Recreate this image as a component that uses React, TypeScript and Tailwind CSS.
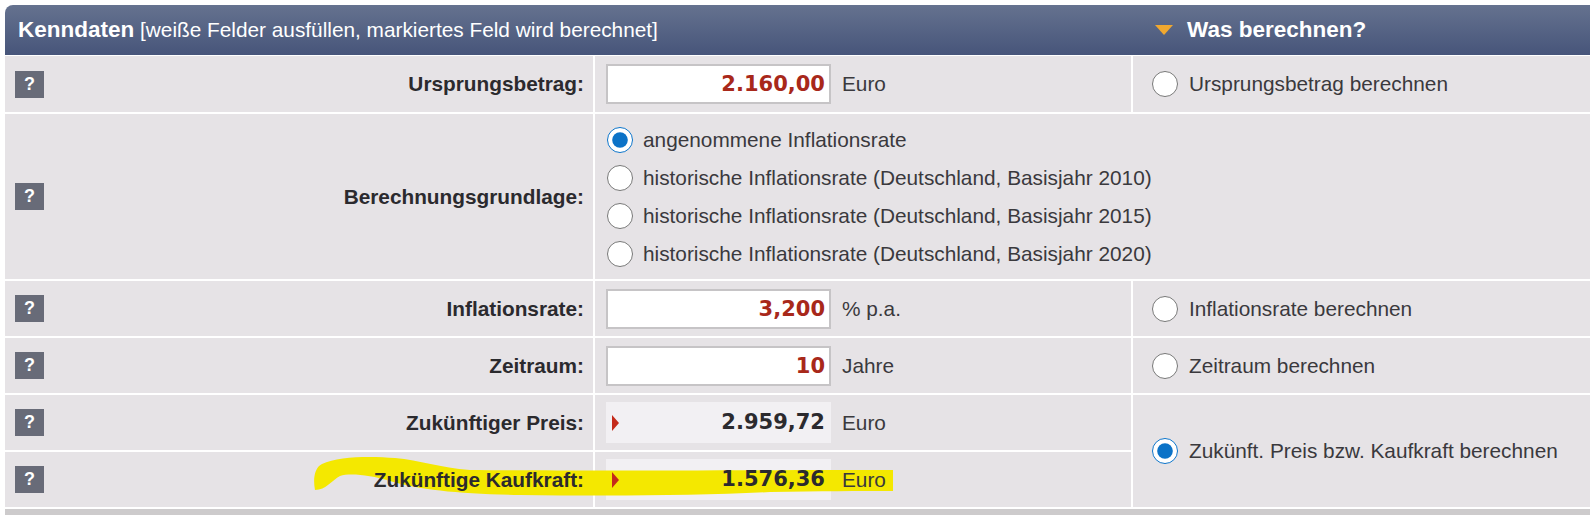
const labelClass = "flex items-center justify-between bg-[#e6e3e6] pl-[10px] pr-[9px]";
const cellClass = "flex items-center bg-[#e6e3e6]";

function HelpButton() {
  return (
    <span className="flex h-[27px] w-[29px] items-center justify-center bg-[#686b78] text-[18px] font-bold text-white">?</span>
  );
}

function Radio({ checked = false }: { checked?: boolean }) {
  return <input type="radio" readOnly checked={checked} className="m-0 h-[26px] w-[26px] shrink-0 accent-[#0b72c7]" />;
}

function Label({ text }: { text: string }) {
  return (
    <div className={labelClass}>
      <HelpButton />
      <span className="relative z-10 text-[20.8px] font-bold text-[#2b2a2e]">{text}</span>
    </div>
  );
}

function InputCell({ value, unit }: { value: string; unit: string }) {
  return (
    <div className={`${cellClass} pl-[11px]`}>
      <input
        readOnly
        value={value}
        className="h-[40px] w-[225px] border-2 border-[#c6c4c6] bg-white pr-[4px] text-right font-['DejaVu_Sans',sans-serif] text-[21px] font-bold text-[#a8281a] outline-none"
      />
      <span className="ml-[11px] text-[20.8px] text-[#3a393d]">{unit}</span>
    </div>
  );
}

function OutputCell({ value, unit }: { value: string; unit: string }) {
  return (
    <div className={`${cellClass} pl-[11px]`}>
      <div className="flex h-[41px] w-[225px] items-center justify-between bg-[#f2f0f3] pl-[6px] pr-[6px]">
        <span className="relative z-10 h-0 w-0 border-y-[8px] border-l-[7px] border-y-transparent border-l-[#c42a1a]" />
        <span className="relative z-10 font-['DejaVu_Sans',sans-serif] text-[21px] font-bold text-[#2b2a2e]">{value}</span>
      </div>
      <span className="relative z-10 ml-[11px] text-[20.8px] text-[#3a393d]">{unit}</span>
    </div>
  );
}

function CalcCell({ text, checked, span }: { text: string; checked?: boolean; span?: boolean }) {
  return (
    <div className={`${cellClass} gap-[11px] pl-[19px] ${span ? "row-span-2" : ""}`}>
      <Radio checked={checked} />
      <span className="text-[20.8px] text-[#3a393d]">{text}</span>
    </div>
  );
}

const bases = [
  "angenommene Inflationsrate",
  "historische Inflationsrate (Deutschland, Basisjahr 2010)",
  "historische Inflationsrate (Deutschland, Basisjahr 2015)",
  "historische Inflationsrate (Deutschland, Basisjahr 2020)",
];

export default function App() {
  return (
    <div className="relative flex h-[515px] w-[1590px] flex-col overflow-hidden bg-white pl-[5px] pt-[5px] font-['Liberation_Sans',sans-serif]">
      {/* Header */}
      <div className="flex h-[50px] shrink-0 items-center justify-between rounded-tl-[8px] bg-gradient-to-b from-[#65728f] to-[#47557a] pl-[13px] text-[20.8px] text-white">
        <div>
          <span className="text-[22.5px] font-bold">Kenndaten</span> [weiße Felder ausfüllen, markiertes Feld wird berechnet]
        </div>
        <div className="flex w-[435px] items-center">
          <span className="h-0 w-0 border-x-[9px] border-t-[10px] border-x-transparent border-t-[#f0a830]" />
          <span className="ml-[14px] text-[22.5px] font-bold">Was berechnen?</span>
        </div>
      </div>

      {/* Form rows */}
      <div className="mt-px grid shrink-0 grid-cols-[588px_536px_1fr] grid-rows-[56px_165px_55px_55px_55px_55px] gap-[2px]">
        <Label text="Ursprungsbetrag:" />
        <InputCell value="2.160,00" unit="Euro" />
        <CalcCell text="Ursprungsbetrag berechnen" />

        <Label text="Berechnungsgrundlage:" />
        <div className="col-span-2 flex flex-col justify-center gap-[12px] bg-[#e6e3e6] pl-[12px]">
          {bases.map((b, i) => (
            <div key={b} className="flex h-[26px] items-center gap-[10px]">
              <Radio checked={i === 0} />
              <span className="text-[20.8px] leading-[26px] text-[#3a393d]">{b}</span>
            </div>
          ))}
        </div>

        <Label text="Inflationsrate:" />
        <InputCell value="3,200" unit="% p.a." />
        <CalcCell text="Inflationsrate berechnen" />

        <Label text="Zeitraum:" />
        <InputCell value="10" unit="Jahre" />
        <CalcCell text="Zeitraum berechnen" />

        <Label text="Zukünftiger Preis:" />
        <OutputCell value="2.959,72" unit="Euro" />
        <CalcCell text="Zukünft. Preis bzw. Kaufkraft berechnen" checked span />

        <Label text="Zukünftige Kaufkraft:" />
        <OutputCell value="1.576,36" unit="Euro" />
      </div>

      <div className="mt-[2px] flex-1 bg-[#cdcbcc]" />

      {/* Marker stroke, sits between the cell backgrounds and the result row's text */}
      <svg className="pointer-events-none absolute left-0 top-0 z-[5]" width="1590" height="515" viewBox="0 0 1590 515">
        <path
          d="M315 490 C313 480 314 468 322 464 C338 456 372 456 395 458 C420 460 440 468 470 470 C560 471 760 470 893 470 L893 491 C860 491 820 491 770 492 C700 496 600 496 520 495 C460 494 420 490 390 481 C370 475 350 473 340 476 C332 480 326 490 315 490 Z"
          fill="#f4e800"
        />
      </svg>
    </div>
  );
}
